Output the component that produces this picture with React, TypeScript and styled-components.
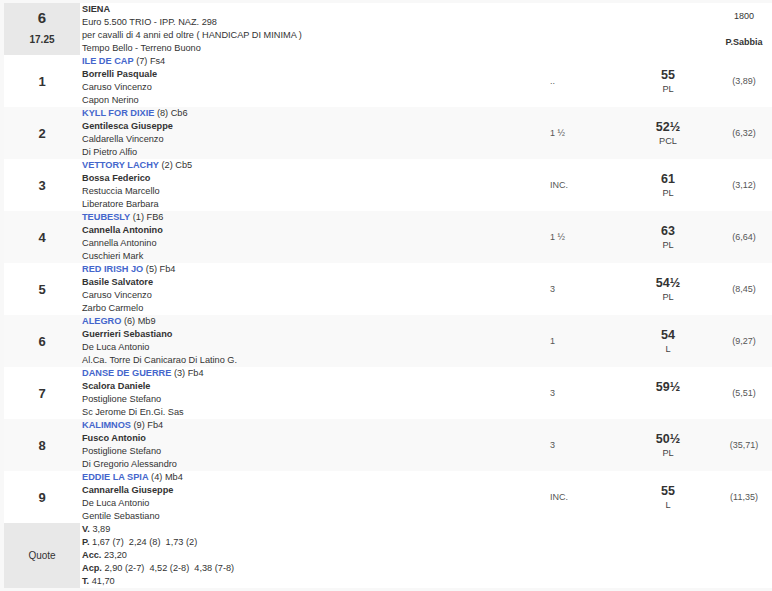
import React from 'react'
import styled, { createGlobalStyle } from 'styled-components'

const GlobalStyle = createGlobalStyle`
    body {
        margin: 0;
        background: #f8f8f8;
        font-family: "Liberation Sans", Arial, sans-serif;
        font-size: 9px;
        color: #333;
    }
`

const Table = styled.div`
    padding: 3px 0 3px 4px;
`

const Row = styled.div<{ $alt?: boolean }>`
    display: grid;
    grid-template-columns: 76px 468px 72px 96px 56px;
    background: ${(p) => (p.$alt ? '#f9f9f9' : '#fff')};
`

const NumCell = styled.div<{ $shade?: boolean }>`
    background: ${(p) => (p.$shade ? '#e8e8e8' : 'transparent')};
    display: flex;
    flex-direction: column;
    align-items: center;
    justify-content: center;
    font-weight: bold;
    font-size: 13px;
    color: #333;
`

const RaceNum = styled.div`
    font-size: 15px;
    line-height: 22px;
`

const RaceTime = styled.div`
    font-size: 10px;
    line-height: 22px;
`

const QuoteLabel = styled.div`
    font-size: 10px;
    font-weight: normal;
`

const Info = styled.div`
    padding-left: 2px;
    line-height: 13px;
    font-size: 9.2px;
`

const Line = styled.div<{ $bold?: boolean }>`
    font-weight: ${(p) => (p.$bold ? 'bold' : 'normal')};
    white-space: nowrap;
`

const Horse = styled.span`
    color: #4466cc;
    font-weight: bold;
`

const Dist = styled.div`
    display: flex;
    align-items: center;
    padding-left: 2px;
    color: #555;
`

const Weight = styled.div`
    display: flex;
    flex-direction: column;
    align-items: center;
    justify-content: center;
`

const WeightNum = styled.div`
    font-size: 12.5px;
    font-weight: bold;
    line-height: 16px;
`

const WeightTag = styled.div`
    font-size: 9.2px;
    line-height: 13px;
    color: #444;
`

const Odds = styled.div`
    display: flex;
    align-items: center;
    justify-content: center;
    color: #555;
`

const HeadRight = styled.div`
    display: flex;
    flex-direction: column;
    align-items: center;
    justify-content: space-around;
`

const Bold = styled.b``

type Runner = {
    n: number
    horse: string
    extra: string
    jockey: string
    trainer: string
    owner: string
    dist: string
    weight: string
    tag: string
    odds: string
}

const runners: Runner[] = [
    { n: 1, horse: 'ILE DE CAP', extra: '(7) Fs4', jockey: 'Borrelli Pasquale', trainer: 'Caruso Vincenzo', owner: 'Capon Nerino', dist: '..', weight: '55', tag: 'PL', odds: '(3,89)' },
    { n: 2, horse: 'KYLL FOR DIXIE', extra: '(8) Cb6', jockey: 'Gentilesca Giuseppe', trainer: 'Caldarella Vincenzo', owner: 'Di Pietro Alfio', dist: '1 ½', weight: '52½', tag: 'PCL', odds: '(6,32)' },
    { n: 3, horse: 'VETTORY LACHY', extra: '(2) Cb5', jockey: 'Bossa Federico', trainer: 'Restuccia Marcello', owner: 'Liberatore Barbara', dist: 'INC.', weight: '61', tag: 'PL', odds: '(3,12)' },
    { n: 4, horse: 'TEUBESLY', extra: '(1) FB6', jockey: 'Cannella Antonino', trainer: 'Cannella Antonino', owner: 'Cuschieri Mark', dist: '1 ½', weight: '63', tag: 'PL', odds: '(6,64)' },
    { n: 5, horse: 'RED IRISH JO', extra: '(5) Fb4', jockey: 'Basile Salvatore', trainer: 'Caruso Vincenzo', owner: 'Zarbo Carmelo', dist: '3', weight: '54½', tag: 'PL', odds: '(8,45)' },
    { n: 6, horse: 'ALEGRO', extra: '(6) Mb9', jockey: 'Guerrieri Sebastiano', trainer: 'De Luca Antonio', owner: 'Al.Ca. Torre Di Canicarao Di Latino G.', dist: '1', weight: '54', tag: 'L', odds: '(9,27)' },
    { n: 7, horse: 'DANSE DE GUERRE', extra: '(3) Fb4', jockey: 'Scalora Daniele', trainer: 'Postiglione Stefano', owner: 'Sc Jerome Di En.Gi. Sas', dist: '3', weight: '59½', tag: '', odds: '(5,51)' },
    { n: 8, horse: 'KALIMNOS', extra: '(9) Fb4', jockey: 'Fusco Antonio', trainer: 'Postiglione Stefano', owner: 'Di Gregorio Alessandro', dist: '3', weight: '50½', tag: 'PL', odds: '(35,71)' },
    { n: 9, horse: 'EDDIE LA SPIA', extra: '(4) Mb4', jockey: 'Cannarella Giuseppe', trainer: 'De Luca Antonio', owner: 'Gentile Sebastiano', dist: 'INC.', weight: '55', tag: 'L', odds: '(11,35)' },
]

export default function App() {
    return (
        <>
            <GlobalStyle />
            <Table>
                <Row>
                    <NumCell $shade>
                        <RaceNum>6</RaceNum>
                        <RaceTime>17.25</RaceTime>
                    </NumCell>
                    <Info>
                        <Line $bold>SIENA</Line>
                        <Line>Euro 5.500 TRIO - IPP. NAZ. 298</Line>
                        <Line>per cavalli di 4 anni ed oltre ( HANDICAP DI MINIMA )</Line>
                        <Line>Tempo Bello - Terreno Buono</Line>
                    </Info>
                    <div />
                    <div />
                    <HeadRight>
                        <div>1800</div>
                        <Bold>P.Sabbia</Bold>
                    </HeadRight>
                </Row>
                {runners.map((r) => (
                    <Row key={r.n} $alt={r.n % 2 === 0}>
                        <NumCell>{r.n}</NumCell>
                        <Info>
                            <Line>
                                <Horse>{r.horse}</Horse> {r.extra}
                            </Line>
                            <Line $bold>{r.jockey}</Line>
                            <Line>{r.trainer}</Line>
                            <Line>{r.owner}</Line>
                        </Info>
                        <Dist>{r.dist}</Dist>
                        <Weight>
                            <WeightNum>{r.weight}</WeightNum>
                            <WeightTag>{r.tag || '\u00a0'}</WeightTag>
                        </Weight>
                        <Odds>{r.odds}</Odds>
                    </Row>
                ))}
                <Row>
                    <NumCell $shade>
                        <QuoteLabel>Quote</QuoteLabel>
                    </NumCell>
                    <Info>
                        <Line><Bold>V.</Bold> 3,89</Line>
                        <Line><Bold>P.</Bold> 1,67 (7)&nbsp; 2,24 (8)&nbsp; 1,73 (2)</Line>
                        <Line><Bold>Acc.</Bold> 23,20</Line>
                        <Line><Bold>Acp.</Bold> 2,90 (2-7)&nbsp; 4,52 (2-8)&nbsp; 4,38 (7-8)</Line>
                        <Line><Bold>T.</Bold> 41,70</Line>
                    </Info>
                    <div />
                    <div />
                    <div />
                </Row>
            </Table>
        </>
    )
}
